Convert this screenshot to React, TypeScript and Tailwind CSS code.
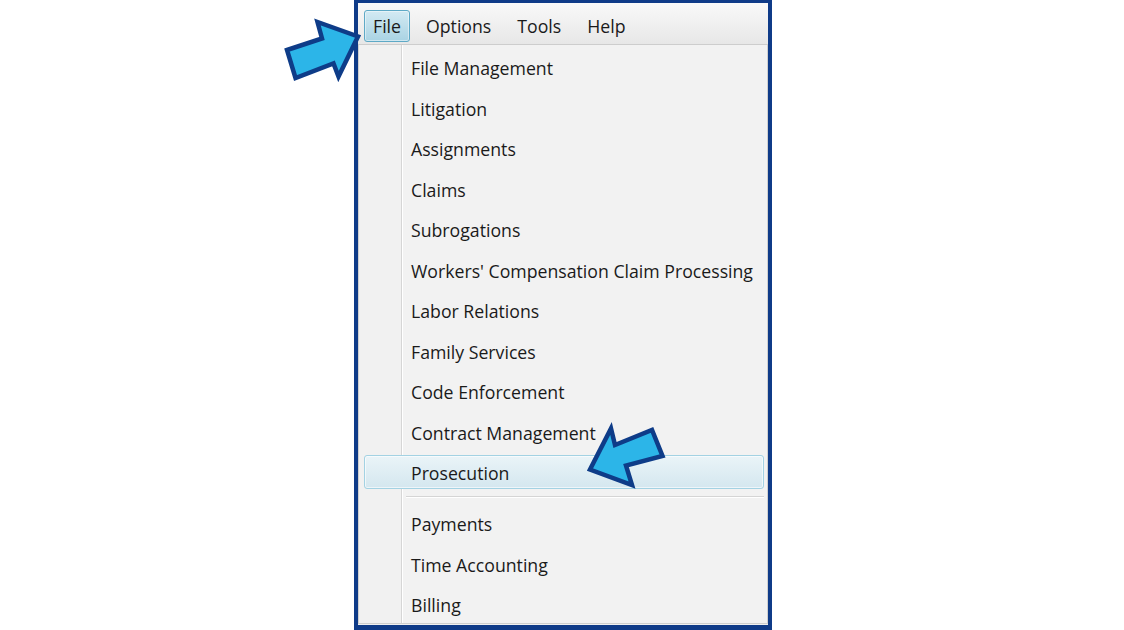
import React from "react";

const group1 = [
  "File Management",
  "Litigation",
  "Assignments",
  "Claims",
  "Subrogations",
  "Workers' Compensation Claim Processing",
  "Labor Relations",
  "Family Services",
  "Code Enforcement",
  "Contract Management",
  "Prosecution",
];
const group2 = ["Payments", "Time Accounting", "Billing"];

function Item({ label, active }: { label: string; active?: boolean }) {
  return (
    <div className="h-[40.5px] py-[3.25px] pl-[5px] pr-[3px]">
      <div
        className={
          active
            ? "h-full rounded-[3px] border border-[#a3d2e3] bg-gradient-to-b from-[#eaf4f8] to-[#d4e7ef] flex items-center pl-[46px] shadow-[inset_0_0_0_1px_rgba(255,255,255,0.6)]"
            : "h-full rounded-[3px] border border-transparent flex items-center pl-[46px]"
        }
      >
        <span className="mt-[4px] text-[17.7px] text-[#1a1a1a] leading-none whitespace-nowrap">{label}</span>
      </div>
    </div>
  );
}

export default function App() {
  return (
    <div
      className="relative w-[1124px] h-[630px] bg-white overflow-hidden"
      style={{ fontFamily: '"Open Sans", "Noto Sans", sans-serif' }}
    >
      <div className="ml-[354px] w-[418px] h-[630px] border-x-[4px] border-t-[3px] border-b-[5px] border-[#0f3b88] bg-[#f0f0f0] flex flex-col">
        {/* menu bar */}
        <div className="h-[42px] shrink-0 flex items-center gap-[6px] pl-[6px] pt-[4px] bg-gradient-to-b from-[#f9f9f9] to-[#e7e7e7] border-b border-[#cdcdcd]">
          <div className="h-[32px] px-[8px] flex items-center rounded-[3px] border border-[#5ea9c6] bg-gradient-to-b from-[#d3eaf3] to-[#a9d3e3] shadow-[inset_0_0_0_1px_rgba(255,255,255,0.45)]">
            <span className="mt-[3px] text-[17.7px] text-[#1a1a1a] leading-none">File</span>
          </div>
          {["Options", "Tools", "Help"].map((m) => (
            <div key={m} className="h-[32px] px-[9px] flex items-center border border-transparent">
              <span className="mt-[3px] text-[17.7px] text-[#1a1a1a] leading-none">{m}</span>
            </div>
          ))}
        </div>
        {/* dropdown */}
        <div className="flex-1 mb-[1px] border-x border-b border-[#cfcfcf] overflow-hidden pt-[2px] bg-[linear-gradient(to_right,#f1f1f1_42px,#d6d6d6_42px,#d6d6d6_43px,#ffffff_43px,#ffffff_44px,#f2f2f2_44px)]">
          {group1.map((l) => (
            <Item key={l} label={l} active={l === "Prosecution"} />
          ))}
          <div className="h-[10.25px] pt-[3px] pl-[47px] pr-[3px]">
            <div className="h-px bg-[#d5d5d5]" />
            <div className="h-px bg-white" />
          </div>
          {group2.map((l) => (
            <Item key={l} label={l} />
          ))}
        </div>
      </div>

      {/* annotation arrows */}
      <svg className="absolute left-0 top-0 pointer-events-none" width="1124" height="630" viewBox="0 0 1124 630">
        <polygon
          points="287,50 322,38.5 317.5,22 358,36.5 338.5,76.5 333.5,63.5 295.5,78"
          fill="#2cb5e8"
          stroke="#0e3c88"
          strokeWidth="4.5"
          strokeLinejoin="miter"
        />
        <polygon
          points="590,469.5 611,428.5 615,445 652,430 662.5,456 626,465.5 632,485"
          fill="#2cb5e8"
          stroke="#0e3c88"
          strokeWidth="4.5"
          strokeLinejoin="miter"
        />
      </svg>
    </div>
  );
}
